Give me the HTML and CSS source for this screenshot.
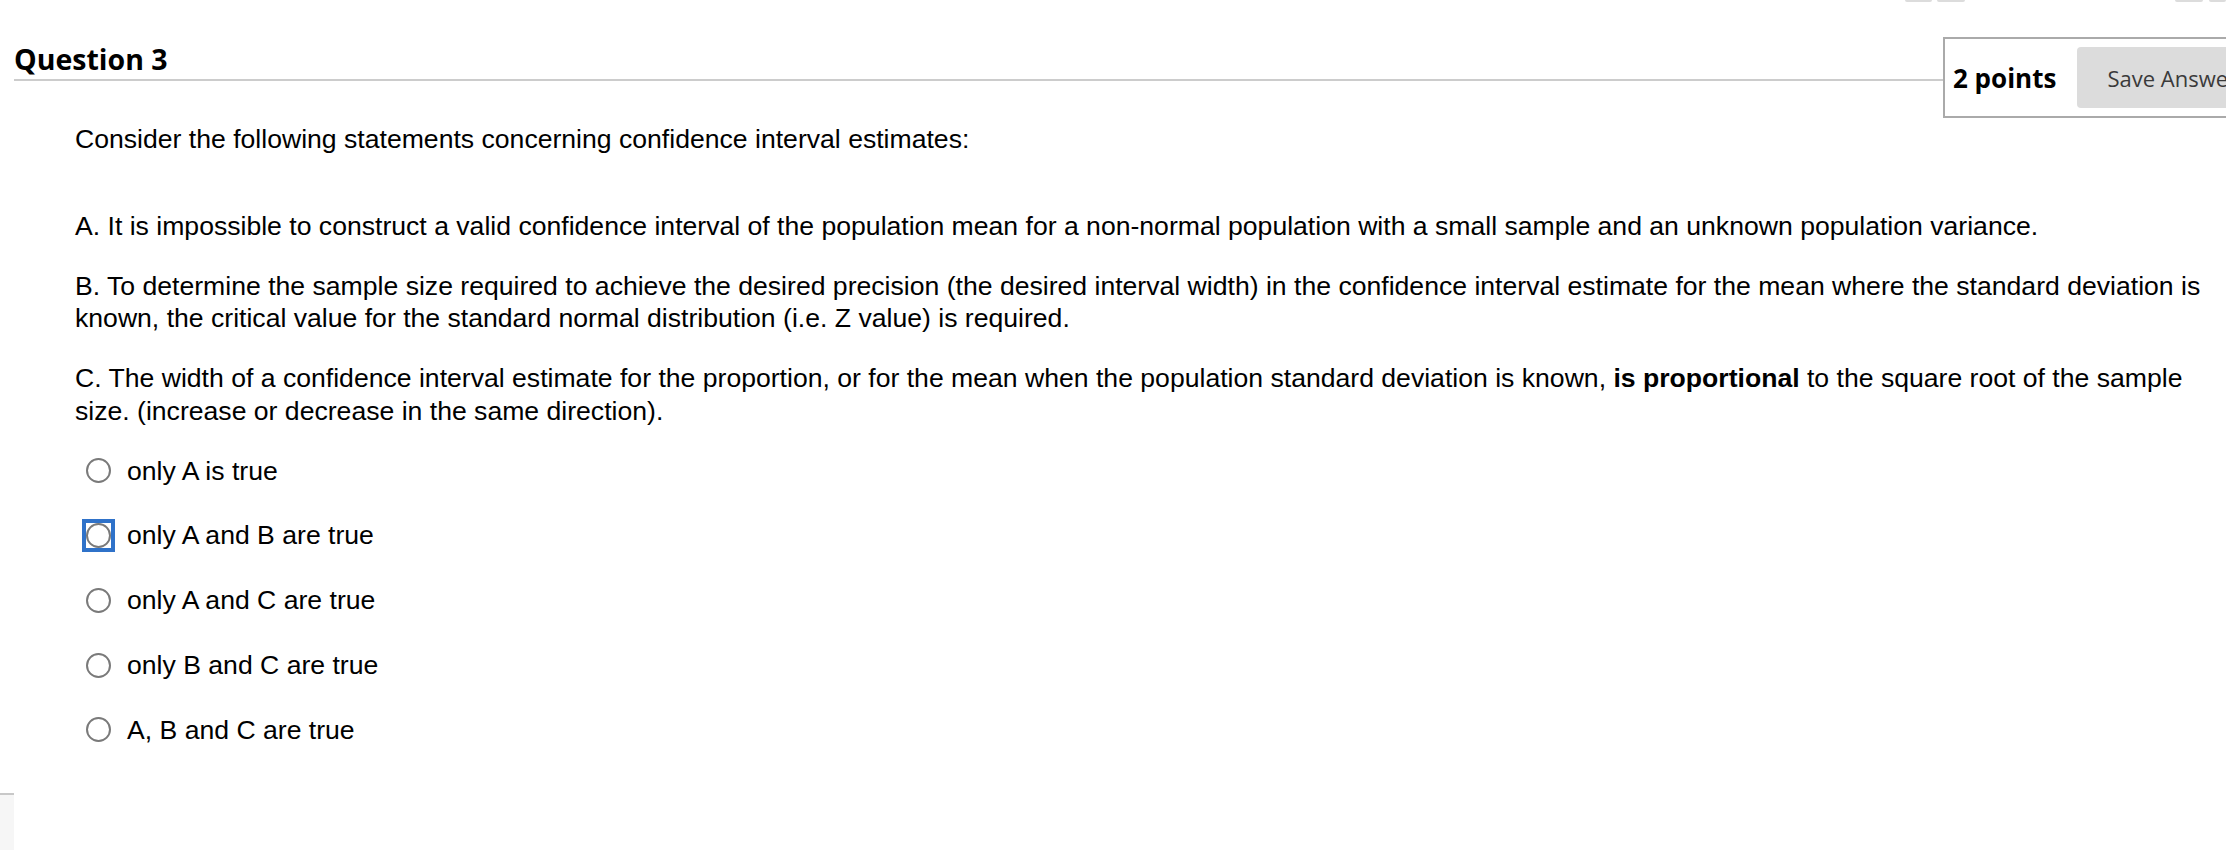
FILE: index.html
```html
<!DOCTYPE html>
<html lang="en">
<head>
<meta charset="utf-8">
<title>Question 3</title>
<link rel="stylesheet" href="styles.css">
</head>
<body>
<div class="tabs">
  <span class="tab tab-a"></span>
  <span class="tab tab-b"></span>
  <span class="tab tab-c"></span>
  <span class="tab tab-d"></span>
</div>
<div class="question">
  <div class="q-head">
    <h3 class="q-title">Question 3</h3>
    <div class="points">
      <span class="points-label">2 points</span>
      <button class="save" type="button">Save Answer</button>
    </div>
  </div>
  <div class="q-body">
    <p class="intro">Consider the following statements concerning confidence interval estimates:</p>
    <p class="stmt">A. It is impossible to construct a valid confidence interval of the population mean for a non-normal population with a small sample and an unknown population variance.</p>
    <p class="stmt">B. To determine the sample size required to achieve the desired precision (the desired interval width) in the confidence interval estimate for the mean where the standard deviation is known, the critical value for the standard normal distribution (i.e. Z value) is required.</p>
    <p class="stmt">C. The width of a confidence interval estimate for the proportion, or for the mean when the population standard deviation is known, <b>is proportional</b> to the square root of the sample size. (increase or decrease in the same direction).</p>
    <ul class="options">
      <li class="option"><span class="radio-box"><input type="radio" name="q3"></span><span class="opt-text">only A is true</span></li>
      <li class="option"><span class="radio-box focused"><input type="radio" name="q3"></span><span class="opt-text">only A and B are true</span></li>
      <li class="option"><span class="radio-box"><input type="radio" name="q3"></span><span class="opt-text">only A and C are true</span></li>
      <li class="option"><span class="radio-box"><input type="radio" name="q3"></span><span class="opt-text">only B and C are true</span></li>
      <li class="option"><span class="radio-box"><input type="radio" name="q3"></span><span class="opt-text">A, B and C are true</span></li>
    </ul>
  </div>
</div>
<div class="next-q"></div>
</body>
</html>
```
FILE: styles.css
```css
html, body {
  margin: 0;
  padding: 0;
  background: #fff;
  overflow: hidden;
}
body {
  width: 2226px;
  height: 850px;
  font-family: "Liberation Sans", Arial, sans-serif;
  color: #000;
}

.tabs {
  display: flex;
  height: 2px;
}
.tab {
  display: block;
  height: 2px;
  background: #dcdcdc;
  border-radius: 0 0 4px 4px;
}
.tab-a { margin-left: 1905px; width: 32px; }
.tab-b { margin-left: 5px; width: 33px; }
.tab-c { margin-left: 210px; width: 33px; }
.tab-d { margin-left: 6px; width: 20px; }

.q-head {
  display: flex;
  align-items: flex-start;
  padding: 35px 0 0 14px;
}
.q-title {
  flex: 1 1 auto;
  min-width: 0;
  margin: 0;
  padding-top: 2px;
  font-family: "Open Sans", sans-serif;
  font-weight: 700;
  font-size: 28.5px;
  line-height: 40px;
  border-bottom: 2px solid #cccccc;
}
.points {
  flex: 0 0 300px;
  min-width: 0;
  margin-right: -17px;
  box-sizing: border-box;
  height: 81px;
  display: flex;
  align-items: center;
  gap: 21px;
  padding-left: 8px;
  border: 2px solid #aaaaaa;
  border-right: none;
  background: #fff;
}
.points-label {
  font-family: "Open Sans", sans-serif;
  font-weight: 700;
  font-size: 26px;
  white-space: nowrap;
}
.save {
  flex-shrink: 0;
  height: 61px;
  padding: 0 30px;
  border: none;
  border-radius: 4px;
  background: #dcdcdc;
  color: #3a3a3a;
  font-family: "Open Sans", sans-serif;
  font-size: 22px;
  white-space: nowrap;
}

.q-body {
  padding: 5px 0 0 75px;
  font-size: 26.6px;
  line-height: 32.5px;
}
.intro {
  margin: 0 0 54px;
}
.stmt {
  margin: 0 0 27.5px;
}
.options {
  list-style: none;
  margin: 0;
  padding: 0;
  display: flex;
  flex-direction: column;
  gap: 32.25px;
}
.option {
  display: flex;
  align-items: center;
  height: 32.5px;
}
.radio-box {
  display: flex;
  width: 25px;
  height: 25px;
  margin-left: 11px;
  margin-right: 16px;
}
.radio-box.focused {
  outline: 4px solid #2f72c9;
}
.radio-box input {
  appearance: none;
  -webkit-appearance: none;
  box-sizing: border-box;
  width: 25px;
  height: 25px;
  margin: 0;
  border: 2px solid #7a7a7a;
  border-radius: 50%;
  background: #fff;
}

.next-q {
  margin-top: 47px;
  width: 14px;
  height: 55px;
  border-top: 2px solid #c8c8c8;
  background: #f6f6f6;
}
```
